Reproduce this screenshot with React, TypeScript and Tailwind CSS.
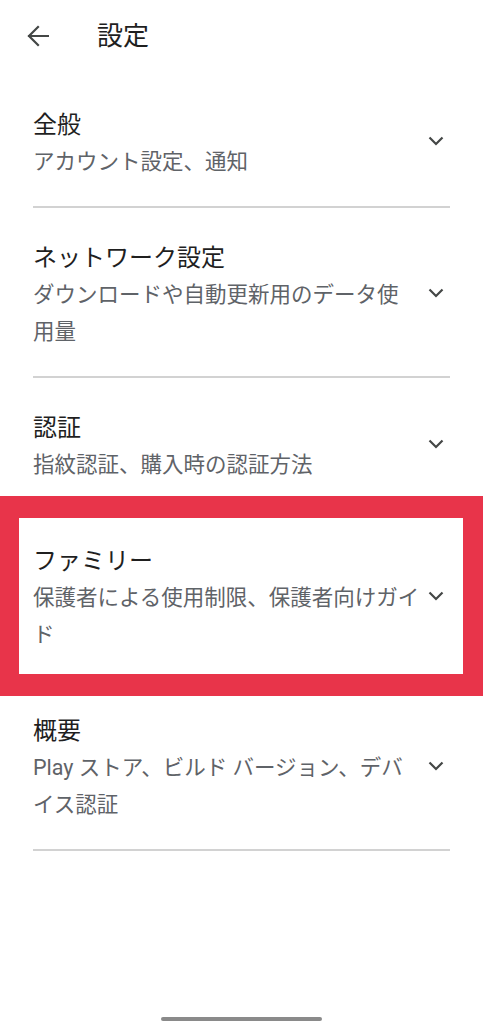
import React from "react";

type Item = {
  title: string;
  lines: string[];
};

const items: Item[] = [
  { title: "全般", lines: ["アカウント設定、通知"] },
  {
    title: "ネットワーク設定",
    lines: ["ダウンロードや自動更新用のデータ使", "用量"],
  },
  { title: "認証", lines: ["指紋認証、購入時の認証方法"] },
  {
    title: "ファミリー",
    lines: ["保護者による使用制限、保護者向けガイ", "ド"],
  },
  {
    title: "概要",
    lines: ["Play ストア、ビルド バージョン、デバ", "イス認証"],
  },
];

function BackArrow() {
  return (
    <svg width="22" height="22" viewBox="0 0 22 22" fill="none">
      <path
        d="M21 11H2M11 2L2 11l9 9"
        stroke="#444746"
        strokeWidth="2.2"
        strokeLinecap="square"
      />
    </svg>
  );
}

function Chevron() {
  return (
    <svg width="16" height="10" viewBox="0 0 16 10" fill="none">
      <path d="M1.5 1.5L8 8l6.5-6.5" stroke="#444746" strokeWidth="2.2" />
    </svg>
  );
}

export default function App() {
  return (
    <div className="relative flex flex-col h-[1024px] bg-white font-['Roboto','Noto_Sans_CJK_JP',sans-serif] overflow-hidden">
      {/* Header */}
      <header className="flex items-center h-[72px] pl-[27px]">
        <BackArrow />
        <h1 className="ml-[48px] text-[26px] leading-none text-[#1f1f1f]">
          設定
        </h1>
      </header>

      {/* Settings list */}
      <div className="px-[33px] pt-[3px]">
        {items.map((item) => (
          <div
            key={item.title}
            className="flex items-center pt-[33px] pb-[26px] border-b-2 border-[#d2d2d2]"
          >
            <div className="flex-1 min-w-0">
              <div className="text-[24px] leading-[35px] text-[#1f1f1f]">
                {item.title}
              </div>
              <div className="text-[21.5px] leading-[37px] text-[#5f6368]">
                {item.lines.map((line) => (
                  <div key={line} className="whitespace-nowrap">
                    {line}
                  </div>
                ))}
              </div>
            </div>
            <div className="mr-[6px] mb-[6px] shrink-0">
              <Chevron />
            </div>
          </div>
        ))}
      </div>

      {/* Highlight annotation over "ファミリー" */}
      <div className="absolute left-0 right-0 top-[496px] h-[200px] border-y-[22px] border-l-[19px] border-r-[20px] border-[#e8344a] pointer-events-none" />

      {/* Gesture bar */}
      <div className="mt-auto mb-[3px] mx-auto w-[161px] h-[4px] rounded-full bg-[#8a8a8a]" />
    </div>
  );
}
